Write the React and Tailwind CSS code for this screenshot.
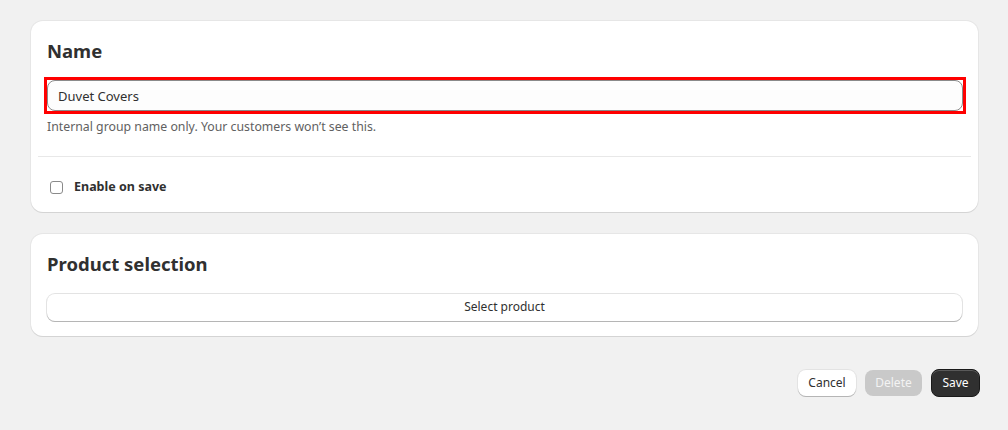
import React, { useState } from "react";

export default function App() {
  const [name, setName] = useState("Duvet Covers");
  const [enabled, setEnabled] = useState(false);

  return (
    <div
      className="min-h-[430px] w-full bg-[#f1f1f1] pl-[31px] pr-[28px] pt-[21px] pb-6 text-[#303030]"
      style={{ fontFamily: '"Noto Sans", "Open Sans", Arial, sans-serif' }}
    >
      <div className="mr-[2px] flex flex-col gap-[22px]">
        {/* group name card */}
        <div className="rounded-xl bg-white pt-[19px] pb-[15px] shadow-[0_1px_0_0_#d4d4d4,0_0_0_1px_#e6e6e6]">
          <div className="px-4">
            <h2 className="text-[18.5px] font-bold leading-[22px] text-[#303030]">Name</h2>
            <div className="mt-[15px] -ml-[3px] -mr-[4px] border-[3px] border-[#ff0000]">
              <input
                value={name}
                onChange={(e) => setName(e.target.value)}
                className="block h-[31px] w-full rounded-lg border border-[#8a8a8a] bg-[#fdfdfd] px-[10px] text-[13px] text-[#303030] outline-none"
              />
            </div>
            <p className="mt-[4px] text-[12.3px] leading-[18px] text-[#616161]">
              Internal group name only. Your customers won’t see this.
            </p>
          </div>
          <div className="mx-[7px] mt-[20px] border-t border-[#e8e8e8]" />
          <label className="mt-[21px] flex items-center gap-[11px] px-[19px]">
            <input
              type="checkbox"
              checked={enabled}
              onChange={(e) => setEnabled(e.target.checked)}
              className="h-[13px] w-[13px] appearance-none rounded-[3px] border border-[#8a8a8a] bg-white"
            />
            <span className="text-[12.5px] font-bold text-[#303030]">Enable on save</span>
          </label>
        </div>

        {/* product selection card */}
        <div className="rounded-xl bg-white px-4 pt-[19px] pb-[15px] shadow-[0_1px_0_0_#d4d4d4,0_0_0_1px_#e6e6e6]">
          <h2 className="text-[18.5px] font-bold leading-[22px] text-[#303030]">Product selection</h2>
          <button className="mt-[19px] block h-[27px] w-full rounded-lg bg-white text-[12px] text-[#303030] shadow-[0_1px_0_0_#b5b5b5,0_0_0_1px_#e3e3e3]">
            Select product
          </button>
        </div>
      </div>

      <div className="mt-[34px] flex justify-end gap-[9px] text-[12px]">
        <button className="h-[26px] w-[58px] rounded-lg bg-white text-[#303030] shadow-[0_1px_0_0_#b5b5b5,0_0_0_1px_#e3e3e3]">
          Cancel
        </button>
        <button className="h-[26px] w-[57px] rounded-lg bg-[#c9c9c9] text-[#f3f3f3]">Delete</button>
        <button className="-mt-px h-[28px] w-[49px] rounded-lg border border-[#1a1a1a] bg-[#303030] text-white shadow-[inset_0_1px_0_0_#5a5a5a]">
          Save
        </button>
      </div>
    </div>
  );
}
